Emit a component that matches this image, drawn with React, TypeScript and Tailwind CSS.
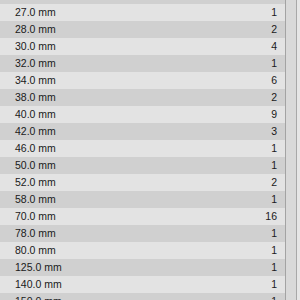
const rows: [string, number][] = [
  ["26.0 mm", 1],
  ["27.0 mm", 1],
  ["28.0 mm", 2],
  ["30.0 mm", 4],
  ["32.0 mm", 1],
  ["34.0 mm", 6],
  ["38.0 mm", 2],
  ["40.0 mm", 9],
  ["42.0 mm", 3],
  ["46.0 mm", 1],
  ["50.0 mm", 1],
  ["52.0 mm", 2],
  ["58.0 mm", 1],
  ["70.0 mm", 16],
  ["78.0 mm", 1],
  ["80.0 mm", 1],
  ["125.0 mm", 1],
  ["140.0 mm", 1],
  ["150.0 mm", 1],
];

export default function App() {
  return (
    <div className="flex w-[300px] h-[300px] overflow-hidden bg-[#e3e3e3] text-[10.5px] text-[#1a1a1a] font-['Liberation_Sans',Arial,sans-serif]">
      <div className="flex flex-col w-[285px] -mt-[13px] shrink-0">
        {rows.map(([size, count], i) => (
          <div
            key={size}
            className={`flex items-center justify-between h-[17px] shrink-0 pl-[15px] pr-[8px] ${
              i % 2 === 0 ? "bg-[#d0d0d0]" : "bg-[#e3e3e3]"
            }`}
          >
            <span className="pt-[1px]">{size}</span>
            <span className="pt-[1px]">{count}</span>
          </div>
        ))}
      </div>
      {/* scrollbar strip */}
      <div className="flex w-[15px] h-full border-l border-[#a3a3a3]">
        <div className="w-[10px] h-full bg-[#d9d9d9]" />
        <div className="w-[1px] h-full bg-[#a8a8a8]" />
        <div className="flex-1 h-full bg-[#e6e6e6]" />
      </div>
    </div>
  );
}
